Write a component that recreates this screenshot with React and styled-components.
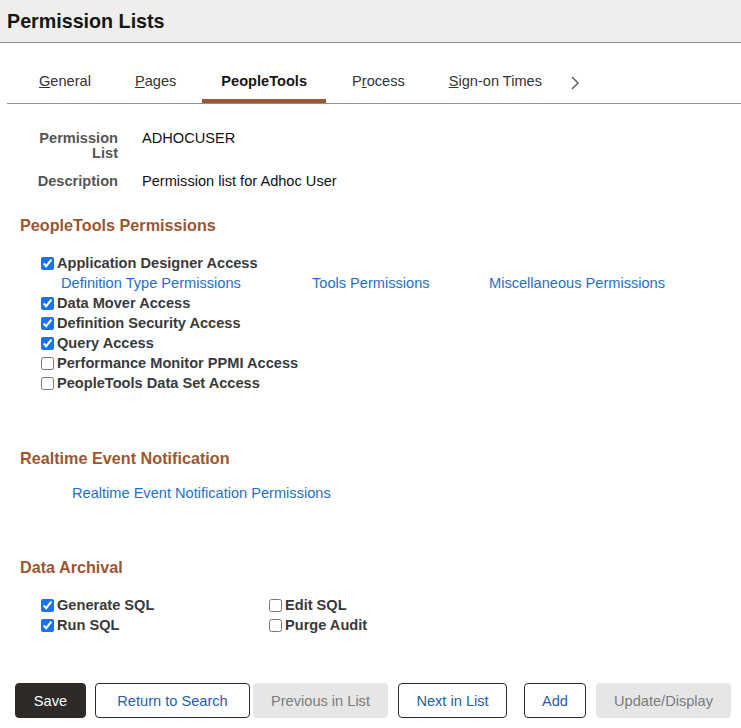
import React from 'react';
import styled, { createGlobalStyle } from 'styled-components';

const GlobalStyle = createGlobalStyle`
  body {
    margin: 0;
    background: #fff;
    font-family: "Liberation Sans", Arial, sans-serif;
    color: #333;
  }
`;

const Page = styled.div`
  width: 741px;
  padding-bottom: 10px;
`;

const Header = styled.div`
  height: 42px;
  background: #efeeed;
  border-bottom: 1px solid #8f8f8f;
  display: flex;
  align-items: center;
  padding-left: 7px;
`;

const Title = styled.h1`
  margin: 0;
  font-size: 19.7px;
  font-weight: bold;
  color: #161616;
`;

const TabBar = styled.div`
  margin: 18px 0 0 7px;
  padding-left: 10px;
  display: flex;
  align-items: stretch;
  height: 42px;
  border-bottom: 1px solid #8f8f8f;
`;

const Tab = styled.div`
  margin: 0 4px;
  padding: 2px ${(p) => (p.$active ? 19 : 18)}px 0;
  display: flex;
  align-items: center;
  font-size: 14.6px;
  color: ${(p) => (p.$active ? '#161616' : '#333')};
  font-weight: ${(p) => (p.$active ? 'bold' : 'normal')};
  border-bottom: 4px solid ${(p) => (p.$active ? '#9c5630' : 'transparent')};
  white-space: nowrap;
`;

const Chevron = styled.div`
  display: flex;
  align-items: center;
  margin-left: 6px;
  padding-top: 2px;
`;

const Fields = styled.div`
  margin-top: 27px;
  padding-left: 20px;
  display: grid;
  grid-template-columns: 98px auto;
  column-gap: 24px;
  row-gap: 13px;
  font-size: 14.6px;
  line-height: 15px;
`;

const FieldLabel = styled.div`
  text-align: right;
  font-weight: bold;
  color: #555;
`;

const FieldValue = styled.div`
  color: #111;
`;

const SectionTitle = styled.h2`
  margin: ${(p) => p.$top}px 0 0 20px;
  font-size: 16.2px;
  line-height: 18px;
  font-weight: bold;
  color: #9c5630;
`;

const CheckList = styled.div`
  margin-top: ${(p) => p.$top}px;
  padding-left: 41px;
  display: grid;
  grid-template-columns: ${(p) => p.$cols || '1fr'};
`;

const CheckRow = styled.label`
  height: 20px;
  display: flex;
  align-items: center;
  font-size: 14.6px;
  font-weight: bold;
  color: #3a3a3a;
  white-space: nowrap;

  input {
    width: 13px;
    height: 13px;
    margin: 0 3px 0 0;
    accent-color: #1a73e8;
  }
`;

const LinkRow = styled.div`
  height: 20px;
  padding-left: 20px;
  display: grid;
  grid-template-columns: 251px 177px auto;
  align-items: center;
`;

const Link = styled.a`
  font-size: 14.6px;
  color: #1f6fc4;
  text-decoration: none;
  white-space: nowrap;
`;

const SingleLink = styled.div`
  margin: 16px 0 0 72px;
  height: 20px;
  display: flex;
  align-items: center;
`;

const ButtonBar = styled.div`
  margin: 48px 0 0 15px;
  display: flex;
`;

const Button = styled.button`
  width: ${(p) => p.$w}px;
  height: 35px;
  margin-left: ${(p) => p.$space || 0}px;
  padding: 0;
  border-radius: 4px;
  font-family: "Liberation Sans", Arial, sans-serif;
  font-size: 14.6px;
  cursor: pointer;
  border: 1px solid ${(p) => (p.$variant === 'disabled' ? '#e6e6e6' : '#2d2a27')};
  background: ${(p) =>
    p.$variant === 'primary' ? '#2d2a27' : p.$variant === 'disabled' ? '#e6e6e6' : '#fff'};
  color: ${(p) =>
    p.$variant === 'primary' ? '#fff' : p.$variant === 'disabled' ? '#7b7b7b' : '#1d5fae'};
`;

const tabs = [
  { key: 'g', first: 'G', rest: 'eneral' },
  { key: 'p', first: 'P', rest: 'ages' },
  { key: 'pt', label: 'PeopleTools', active: true },
  { key: 'pr', pre: 'P', first: 'r', rest: 'ocess' },
  { key: 's', first: 'S', rest: 'ign-on Times' },
];

const Check = ({ checked, children }) => (
  <CheckRow>
    <input type="checkbox" defaultChecked={checked} />
    {children}
  </CheckRow>
);

export default function App() {
  return (
    <Page>
      <GlobalStyle />
      <Header>
        <Title>Permission Lists</Title>
      </Header>

      <TabBar>
        {tabs.map((t) => (
          <Tab key={t.key} $active={t.active}>
            {t.label || (
              <span>
                {t.pre}
                <u>{t.first}</u>
                {t.rest}
              </span>
            )}
          </Tab>
        ))}
        <Chevron>
          <svg width="10" height="16" viewBox="0 0 10 16">
            <path d="M2 2 L8 8 L2 14" fill="none" stroke="#666" strokeWidth="1.6" />
          </svg>
        </Chevron>
      </TabBar>

      <Fields>
        <FieldLabel>Permission<br />List</FieldLabel>
        <FieldValue>ADHOCUSER</FieldValue>
        <FieldLabel>Description</FieldLabel>
        <FieldValue>Permission list for Adhoc User</FieldValue>
      </Fields>

      <SectionTitle $top={27}>PeopleTools Permissions</SectionTitle>
      <CheckList $top={19}>
        <Check checked>Application Designer Access</Check>
        <LinkRow>
          <Link href="#">Definition Type Permissions</Link>
          <Link href="#">Tools Permissions</Link>
          <Link href="#">Miscellaneous Permissions</Link>
        </LinkRow>
        <Check checked>Data Mover Access</Check>
        <Check checked>Definition Security Access</Check>
        <Check checked>Query Access</Check>
        <Check>Performance Monitor PPMI Access</Check>
        <Check>PeopleTools Data Set Access</Check>
      </CheckList>

      <SectionTitle $top={56}>Realtime Event Notification</SectionTitle>
      <SingleLink>
        <Link href="#">Realtime Event Notification Permissions</Link>
      </SingleLink>

      <SectionTitle $top={55}>Data Archival</SectionTitle>
      <CheckList $top={19} $cols="228px auto">
        <Check checked>Generate SQL</Check>
        <Check>Edit SQL</Check>
        <Check checked>Run SQL</Check>
        <Check>Purge Audit</Check>
      </CheckList>

      <ButtonBar>
        <Button $variant="primary" $w={71}>Save</Button>
        <Button $space={9} $w={155}>Return to Search</Button>
        <Button $space={3} $w={135} $variant="disabled">Previous in List</Button>
        <Button $space={10} $w={109}>Next in List</Button>
        <Button $space={17} $w={62}>Add</Button>
        <Button $space={10} $w={135} $variant="disabled">Update/Display</Button>
      </ButtonBar>
    </Page>
  );
}
